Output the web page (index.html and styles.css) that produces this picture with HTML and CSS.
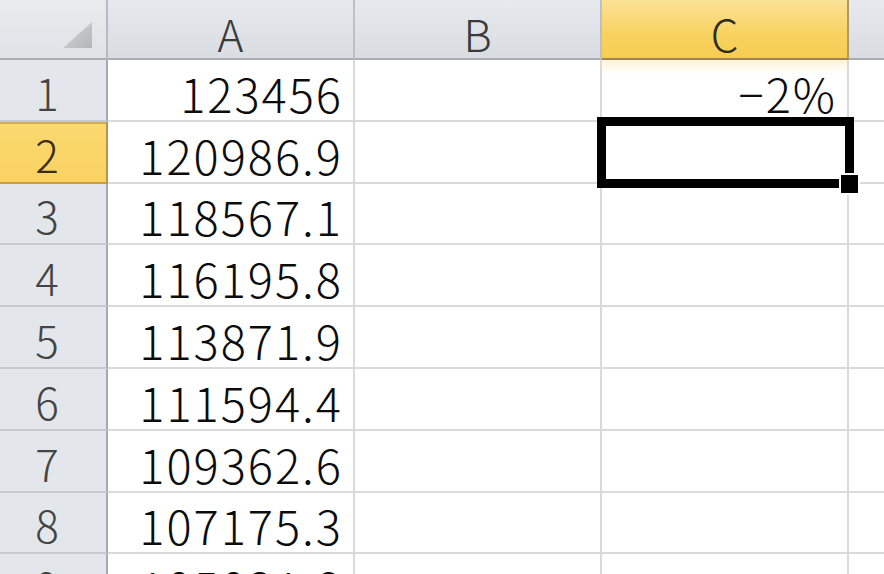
FILE: index.html
```html
<!DOCTYPE html>
<html lang="ja">
<head>
  <meta charset="UTF-8">
  <title>Sheet1</title>
  <link rel="stylesheet" href="styles.css">
</head>
<body>
  <div class="sheet">
    <!-- column headers -->
    <div class="corner"><span class="corner-mark"></span></div>
    <div class="col-hd">A</div>
    <div class="col-hd">B</div>
    <div class="col-hd sel">C</div>
    <div class="col-hd last"></div>

    <div class="row-hd">1</div>
    <div class="cell">123456</div>
    <div class="cell"></div>
    <div class="cell glow">−2%</div>
    <div class="cell last"></div>

    <div class="row-hd sel">2</div>
    <div class="cell">120986.9</div>
    <div class="cell"></div>
    <div class="cell active"></div>
    <div class="cell last"></div>

    <div class="row-hd">3</div>
    <div class="cell">118567.1</div>
    <div class="cell"></div>
    <div class="cell"></div>
    <div class="cell last"></div>

    <div class="row-hd">4</div>
    <div class="cell">116195.8</div>
    <div class="cell"></div>
    <div class="cell"></div>
    <div class="cell last"></div>

    <div class="row-hd">5</div>
    <div class="cell">113871.9</div>
    <div class="cell"></div>
    <div class="cell"></div>
    <div class="cell last"></div>

    <div class="row-hd">6</div>
    <div class="cell">111594.4</div>
    <div class="cell"></div>
    <div class="cell"></div>
    <div class="cell last"></div>

    <div class="row-hd">7</div>
    <div class="cell">109362.6</div>
    <div class="cell"></div>
    <div class="cell"></div>
    <div class="cell last"></div>

    <div class="row-hd">8</div>
    <div class="cell">107175.3</div>
    <div class="cell"></div>
    <div class="cell"></div>
    <div class="cell last"></div>

    <div class="row-hd">9</div>
    <div class="cell">105031.8</div>
    <div class="cell"></div>
    <div class="cell"></div>
    <div class="cell last"></div>
  </div>
</body>
</html>
```

FILE: styles.css
```css
html, body { margin: 0; padding: 0; background: #fff; overflow: hidden; }
body { font-family: "Noto Sans CJK JP", "Liberation Sans", sans-serif; font-weight: 300; }

.sheet {
  display: grid;
  grid-template-columns: 108px 247px 247px 247px 1fr;
  grid-template-rows: 60px;
  grid-auto-rows: 61.8px;
  width: 884px;
  height: 574px;
  overflow: hidden;
}

/* header strip */
.corner, .col-hd, .row-hd {
  box-sizing: border-box;
  display: flex;
  align-items: flex-end;
  justify-content: center;
  color: #3a3a3a;
  font-size: 44px;
  line-height: 44px;
}
.corner {
  background: linear-gradient(#e9ebee, #dfe2e6);
  border-right: 2px solid #b8bcc1;
  border-bottom: 2px solid #a9adb3;
  justify-content: flex-end;
  padding: 0 14px 10px 0;
}
.corner-mark {
  width: 29px;
  height: 26px;
  background: linear-gradient(135deg, #d4d6d8, #b3b5b8);
  clip-path: polygon(100% 0, 100% 100%, 0 100%);
}
.col-hd {
  background: linear-gradient(#e6e9ed, #d9dde2);
  border-right: 2px solid #bcc0c6;
  border-bottom: 2px solid #a9adb3;
  padding-bottom: 3px;
}
.col-hd.last { border-right: 0; }
.col-hd.sel {
  background: linear-gradient(#fbe296, #f8d260 60%, #f6cd52);
  border-right-color: #b39a5a;
  border-bottom-color: #9c8556;
  color: #2e2a1c;
}

.row-hd {
  background: #e3e6ea;
  border-right: 2px solid #a6aaaf;
  border-bottom: 2px solid #c6cacf;
  padding: 0 12px 6px 0;
  color: #444;
}
.row-hd.sel {
  background: linear-gradient(#fbd96f, #f9d262);
  border-bottom-color: #c99c42;
  border-right-color: #b7954d;
  box-shadow: inset 0 2px 0 #d8ac4c;
  color: #3b2e10;
}

/* data cells */
.cell {
  box-sizing: border-box;
  display: flex;
  align-items: flex-end;
  justify-content: flex-end;
  padding: 0 10px 4px 0;
  border-right: 2px solid #dadada;
  border-bottom: 2px solid #dadada;
  color: #0c0c0c;
  font-size: 47px;
  line-height: 47px;
  letter-spacing: 2px;
}
.cell.last { border-right: 0; }
.cell.glow { background: linear-gradient(#fdf3d8, #fff 14px); }

/* selected cell frame + fill handle */
.cell.active { position: relative; }
.cell.active::before {
  content: "";
  position: absolute;
  top: -5px;
  left: -5px;
  right: -7px;
  bottom: -6px;
  border: 9px solid #000;
  z-index: 2;
}
.cell.active::after {
  content: "";
  position: absolute;
  right: -11px;
  bottom: -11px;
  width: 17px;
  height: 18px;
  background: #000;
  box-shadow: 0 0 0 2px #fff;
  z-index: 3;
}
```
